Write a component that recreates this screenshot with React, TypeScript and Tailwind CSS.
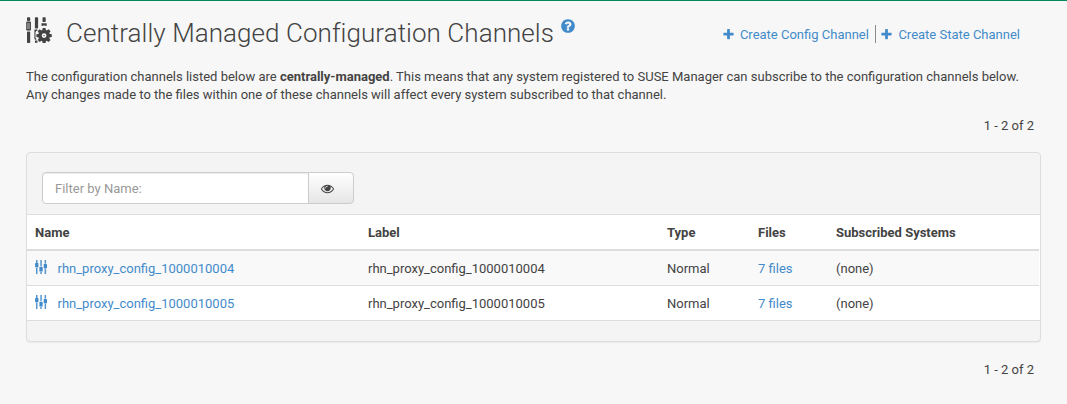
import React from "react";

const PLUS =
  "M1600 736v192q0 40-28 68t-68 28h-416v416q0 40-28 68t-68 28h-192q-40 0-68-28t-28-68v-416h-416q-40 0-68-28t-28-68v-192q0-40 28-68t68-28h416v-416q0-40 28-68t68-28h192q40 0 68 28t28 68v416h416q40 0 68 28t28 68z";
const EYE =
  "M1664 960q-152-236-381-353 61 104 61 225 0 185-131.5 316.5t-316.5 131.5-316.5-131.5-131.5-316.5q0-121 61-225-229 117-381 353 133 205 333.5 326.5t434.5 121.5 434.5-121.5 333.5-326.5zm-720-384q0-20-14-34t-34-14q-125 0-214.5 89.5t-89.5 214.5q0 20 14 34t34 14 34-14 14-34q0-86 61-147t147-61q20 0 34-14t14-34zm848 384q0 34-20 69-140 230-376.5 368.5t-499.5 138.5-499.5-139-376.5-368q-20-35-20-69t20-69q140-229 376.5-368t499.5-139 499.5 139 376.5 368q20 35 20 69z";
const QUESTION =
  "M1024 1376v-192q0-14-9-23t-23-9h-192q-14 0-23 9t-9 23v192q0 14 9 23t23 9h192q14 0 23-9t9-23zm256-672q0-88-55.5-163t-138.5-116-170-41q-243 0-371 213-15 24 8 42l132 100q7 6 19 6 16 0 25-12 53-68 86-92 34-24 86-24 48 0 85.5 26t37.5 59q0 38-20 61t-68 45q-63 28-115.5 86.5t-52.5 125.5v36q0 14 9 23t23 9h192q14 0 23-9t9-23q0-19 21.5-49.5t54.5-49.5q32-18 49-28.5t46-35 44.5-48 28-60.5 12.5-81zm384 192q0 209-103 385.5t-279.5 279.5-385.5 103-385.5-103-279.5-279.5-103-385.5 103-385.5 279.5-279.5 385.5-103 385.5 103 279.5 279.5 103 385.5z";

function Glyph({ d, className }: { d: string; className: string }) {
  return (
    <svg viewBox="0 0 1792 1792" fill="currentColor" className={className}>
      <path d={d} />
    </svg>
  );
}

function ManagedIcon() {
  return (
    <svg viewBox="0 0 26 26" fill="#434343" className="h-[26px] w-[26px] shrink-0">
      <rect x="1" y="0.3" width="3.2" height="3.7" rx="0.8" />
      <rect x="0.2" y="4.6" width="4.8" height="9" rx="0.9" />
      <path d="M1 7h3.2M1 9h3.2M1 11h3.2" stroke="#f7f7f7" strokeWidth="0.7" />
      <rect x="1" y="14.6" width="3.2" height="11.4" rx="0.8" />
      <rect x="8.9" y="0.3" width="3.2" height="11.2" rx="0.8" />
      <path d="M8.4 12.6h3.2l-.4 1.4h-1.1l-.6 1.6v5.4l1 1-.8 1.2-1.3-1.4z" />
      <rect x="8.9" y="23.4" width="2.6" height="2.4" rx="0.6" />
      <rect x="16.5" y="0.3" width="3.2" height="4.8" rx="0.8" />
      <path d="M15.5 6.2h5.2v2.9q-2.6-1-5.2 0z" />
      <g transform="translate(18.1 18.6)">
        <circle r="4.1" fill="none" stroke="#434343" strokeWidth="3.4" />
        {[0, 45, 90, 135, 180, 225, 270, 315].map((angle) => (
          <path key={angle} d="M-1.9-5h3.8l-.5-2.7h-2.8z" transform={`rotate(${angle})`} />
        ))}
        <circle r="0.7" />
      </g>
    </svg>
  );
}

function ChannelIcon() {
  return (
    <svg viewBox="0 0 12 14" fill="#428bca" className="h-3.5 w-3 shrink-0">
      <path
        d="M1 0h1.5v3H1zM1 7.6h1.5V14H1zM5.3 0h1.5v6.6H5.3zM5.3 11.8h1.5V14H5.3zM9.6 0h1.5v3.8H9.6zM9.6 8.4h1.5V14H9.6z"
        fillOpacity="0.9"
      />
      <rect x="0.1" y="3" width="3.3" height="4.2" rx="0.5" />
      <rect x="4.4" y="7" width="3.3" height="4.4" rx="0.5" />
      <rect x="8.7" y="4" width="3.3" height="4.2" rx="0.5" />
    </svg>
  );
}

const columns = "grid grid-cols-[333px_299px_91px_78px_1fr] items-center";

export default function App() {
  return (
    <div className="h-[404px] w-[1067px] overflow-hidden border-t border-[#02875f] bg-[#f7f7f7] pl-[26px] font-['Roboto',sans-serif] text-[13px] leading-[18px] text-[#434343]">
      <header className="flex h-[67px] w-[994px] items-start justify-between">
        <h1 className="flex items-start pt-4 font-light">
          <ManagedIcon />
          <span className="ml-3.5 whitespace-nowrap text-[26px] leading-8 tracking-[0.06px]">
            Centrally Managed Configuration Channels
          </span>
          <Glyph d={QUESTION} className="ml-[6px] mt-px h-4 w-4 text-[#428bca]" />
        </h1>
        <nav className="flex items-center pt-6 text-[#428bca]">
          <a className="flex items-center whitespace-nowrap border-r border-[#8c8c8c] pr-[6px]">
            <Glyph d={PLUS} className="mr-[5px] h-[13px] w-[13px]" />
            <span className="relative top-px">Create Config Channel</span>
          </a>
          <a className="flex items-center whitespace-nowrap pl-[4.5px]">
            <Glyph d={PLUS} className="mr-[5px] h-[13px] w-[13px]" />
            <span className="relative top-px">Create State Channel</span>
          </a>
        </nav>
      </header>

      <p className="whitespace-nowrap">
        The configuration channels listed below are <strong>centrally-managed</strong>. This means that any system
        registered to SUSE Manager can subscribe to the configuration channels below.
        <br />
        Any changes made to the files within one of these channels will affect every system subscribed to that channel.
      </p>

      <div className="mt-[13px] w-[1008px] text-right">1 - 2 of 2</div>

      <section className="mt-[17px] h-[190px] w-[1015px] rounded-[4px] border border-[#dddddd] bg-[#f4f4f4] shadow-[0_1px_1px_rgba(0,0,0,0.05)]">
        <div className="flex h-[61px] pl-[15px] pt-[19px]">
          <div className="flex h-8 w-[267px] items-center rounded-l-[4px] border border-[#cccccc] bg-white pl-3 pt-0.5 text-[#999999] shadow-[inset_0_1px_1px_rgba(0,0,0,0.075)]">
            Filter by Name:
          </div>
          <button className="-ml-px flex h-8 w-[46px] items-center rounded-r-[4px] border border-[#cccccc] bg-linear-to-b from-white to-[#e6e6e6] pl-3">
            <Glyph d={EYE} className="h-[13px] w-[13px]" />
          </button>
        </div>
        <div className="border-y border-[#dddddd] bg-white">
          <div className={`${columns} mr-px h-9 border-b-2 border-[#dddddd] pl-2 pt-0.5 font-bold`}>
            <span>Name</span>
            <span>Label</span>
            <span>Type</span>
            <span>Files</span>
            <span>Subscribed Systems</span>
          </div>
          {["rhn_proxy_config_1000010004", "rhn_proxy_config_1000010005"].map((name, i) => (
            <div
              key={name}
              className={`${columns} mr-px pl-2 pt-0.5 ${i === 0 ? "h-[35px] border-b border-[#dddddd] bg-[#f9f9f9]" : "h-[34px]"}`}
            >
              <a className="flex h-[18px] items-center text-[#428bca]">
                <span className="mr-[10.5px] flex pb-1">
                  <ChannelIcon />
                </span>
                {name}
              </a>
              <span>{name}</span>
              <span>Normal</span>
              <a className="text-[#428bca]">7 files</a>
              <span>(none)</span>
            </div>
          ))}
        </div>
      </section>

      <div className="mt-[19px] w-[1008px] text-right">1 - 2 of 2</div>
    </div>
  );
}
